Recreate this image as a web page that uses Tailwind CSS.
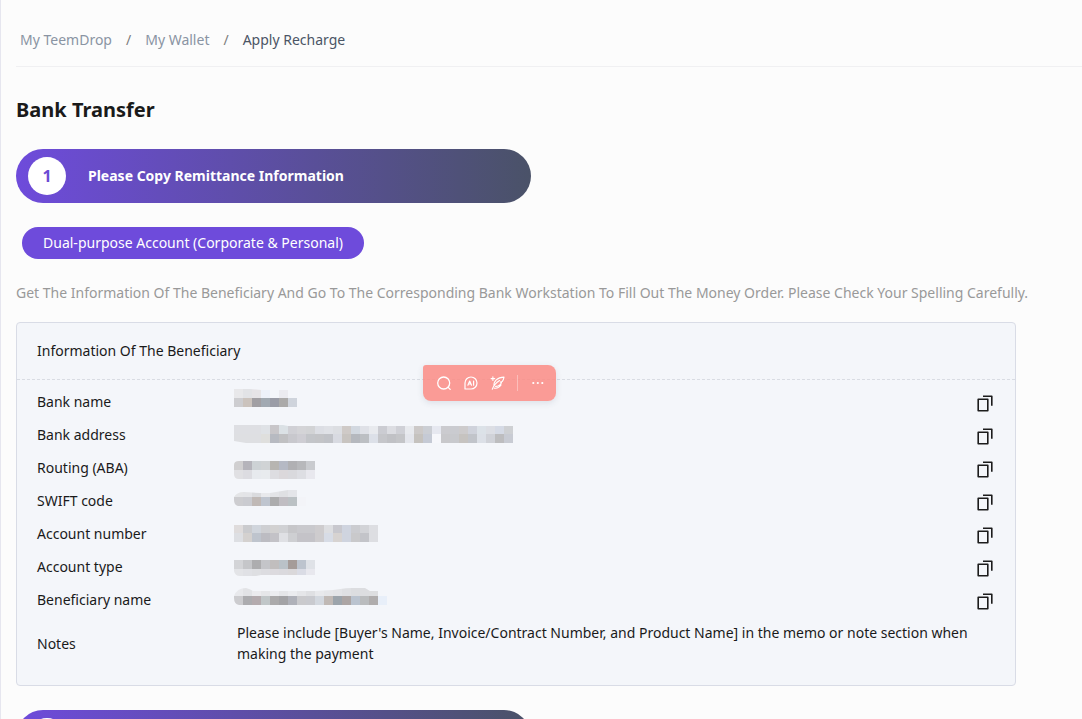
<!DOCTYPE html>
<html lang="en">

<head>
	<meta charset="UTF-8" />
	<meta name="viewport" content="width=device-width, initial-scale=1.0" />
	<title>Apply Recharge - TeemDrop</title>
	<script src="https://cdn.jsdelivr.net/npm/@tailwindcss/browser@4"></script>
</head>

<body class="bg-[#fcfcfc] font-['Noto_Sans','Open_Sans',sans-serif] text-[14px] text-[#1a1a1a]">
	<main class="min-h-screen border-l border-[#e6e6ef] pl-[15px]">
		<nav aria-label="Breadcrumb" class="border-b border-[#f0f0f2] pt-[30px] pb-4 pl-1">
			<ol class="flex items-center gap-[14px] leading-5 text-[#8a94a3]">
				<li><a href="#">My TeemDrop</a></li>
				<li aria-hidden="true" class="text-[#7d7d7d]">/</li>
				<li><a href="#">My Wallet</a></li>
				<li aria-hidden="true" class="text-[#7d7d7d]">/</li>
				<li class="text-[#4b5565]" aria-current="page">Apply Recharge</li>
			</ol>
		</nav>

		<h1 class="mt-7 text-[20px] leading-[30px] font-bold">Bank Transfer</h1>

		<div class="mt-6 flex h-[54px] max-w-[515px] items-center gap-[22px] rounded-full bg-linear-to-r/srgb from-[#6e4bdb] to-[#4a5268] pl-3 font-bold text-white">
			<span class="flex size-[38px] items-center justify-center rounded-full bg-white text-[16px] text-[#6b4bd3]">1</span>
			<h2 class="pb-[2px]">Please Copy Remittance Information</h2>
		</div>

		<button type="button" class="mt-6 ml-[6px] block h-8 min-w-[342px] rounded-full bg-[#6e4bdb] px-4 pb-[2px] text-white">Dual-purpose Account (Corporate &amp; Personal)</button>

		<p class="mt-6 leading-5 text-[#999]">Get The Information Of The Beneficiary And Go To The Corresponding Bank Workstation To Fill Out The Money Order. Please Check Your Spelling Carefully.</p>

		<section class="relative mt-[19px] max-w-[1000px] rounded border border-[#d9dce6] bg-[#f4f6fa] pb-[14px]">
			<h3 class="border-b border-dashed border-[#d9dce3] px-5 leading-[56px]">Information Of The Beneficiary</h3>
			<table class="mt-[6px] w-full text-left">
				<tbody>
					<tr class="h-[33px]">
						<th scope="row" class="w-[217px] pb-[2px] pl-5 font-normal">Bank name</th>
						<td><svg data-mosaic="0" class="block" width="288" height="33" aria-hidden="true"></svg></td>
						<td class="w-10 pt-[2px]"><button type="button" aria-label="Copy bank name" class="ml-[2px] block"><svg width="16" height="17"><use href="#copy" /></svg></button></td>
					</tr>
					<tr class="h-[33px]">
						<th scope="row" class="pb-[2px] pl-5 font-normal">Bank address</th>
						<td><svg data-mosaic="1" class="block" width="288" height="33" aria-hidden="true"></svg></td>
						<td class="pt-[2px]"><button type="button" aria-label="Copy bank address" class="ml-[2px] block"><svg width="16" height="17"><use href="#copy" /></svg></button></td>
					</tr>
					<tr class="h-[33px]">
						<th scope="row" class="pb-[2px] pl-5 font-normal">Routing (ABA)</th>
						<td><svg data-mosaic="2" class="block" width="288" height="33" aria-hidden="true"></svg></td>
						<td class="pt-[2px]"><button type="button" aria-label="Copy routing" class="ml-[2px] block"><svg width="16" height="17"><use href="#copy" /></svg></button></td>
					</tr>
					<tr class="h-[33px]">
						<th scope="row" class="pb-[2px] pl-5 font-normal">SWIFT code</th>
						<td><svg data-mosaic="3" class="block" width="288" height="33" aria-hidden="true"></svg></td>
						<td class="pt-[2px]"><button type="button" aria-label="Copy SWIFT code" class="ml-[2px] block"><svg width="16" height="17"><use href="#copy" /></svg></button></td>
					</tr>
					<tr class="h-[33px]">
						<th scope="row" class="pb-[2px] pl-5 font-normal">Account number</th>
						<td><svg data-mosaic="4" class="block" width="288" height="33" aria-hidden="true"></svg></td>
						<td class="pt-[2px]"><button type="button" aria-label="Copy account number" class="ml-[2px] block"><svg width="16" height="17"><use href="#copy" /></svg></button></td>
					</tr>
					<tr class="h-[33px]">
						<th scope="row" class="pb-[2px] pl-5 font-normal">Account type</th>
						<td><svg data-mosaic="5" class="block" width="288" height="33" aria-hidden="true"></svg></td>
						<td class="pt-[2px]"><button type="button" aria-label="Copy account type" class="ml-[2px] block"><svg width="16" height="17"><use href="#copy" /></svg></button></td>
					</tr>
					<tr class="h-[33px]">
						<th scope="row" class="pb-[2px] pl-5 font-normal">Beneficiary name</th>
						<td><svg data-mosaic="6" class="block" width="288" height="33" aria-hidden="true"></svg></td>
						<td class="pt-[2px]"><button type="button" aria-label="Copy beneficiary name" class="ml-[2px] block"><svg width="16" height="17"><use href="#copy" /></svg></button></td>
					</tr>
					<tr class="h-[54px]">
						<th scope="row" class="pb-[2px] pl-5 font-normal">Notes</th>
						<td colspan="2" class="pr-5 pb-[2px] pl-[3px] leading-[21px]">Please include [Buyer's Name, Invoice/Contract Number, and Product Name] in the memo or note section when making the payment</td>
					</tr>
				</tbody>
			</table>

			<!-- floating selection toolbar -->
			<div role="toolbar" aria-label="Quick actions" class="absolute top-[42px] left-[406px] flex h-9 w-[133px] items-center rounded-lg rounded-tl-[3px] bg-[#fa8b84]/85 pl-[7px] text-white shadow-[0_2px_6px_rgba(60,70,100,0.12)]">
				<button type="button" aria-label="Search" class="flex w-[27px] justify-center">
					<svg width="16" height="16" fill="none" stroke="currentColor" stroke-width="1.3" stroke-linecap="round"><circle cx="7.7" cy="8" r="6" /><path d="M12.2 12.4l2 2" /></svg>
				</button>
				<button type="button" aria-label="Ask AI" class="flex w-[27px] justify-center">
					<svg width="16" height="16" fill="none" stroke="currentColor" stroke-linecap="round" stroke-linejoin="round"><path stroke-width="1.2" d="M8 2a6 6 0 1 1 0 12H2V8a6 6 0 0 1 6-6z" /><path stroke-width="1.2" d="M4.9 10.2l1.8-4.2 1.8 4.2M5.6 9h2.2M10.6 6v4.2" /></svg>
				</button>
				<button type="button" aria-label="Rewrite" class="flex w-[27px] justify-center">
					<svg width="16" height="16" fill="none" stroke="currentColor" stroke-width="1.1" stroke-linecap="round" stroke-linejoin="round"><path d="M2.3 14.2C3.5 10.7 6 7.7 9.6 5.5M4 10.8C3.4 6.4 7.2 2.2 14 2.1c-.3 1.8-.8 3.2-1.7 4.4l-1.8.5 1 .7c-1.2 2.2-3.3 3.6-5.9 3.7M4.3 13.1c3 .6 5.1-.8 6.8-3.1M2.9 1.8v3.6M1.1 3.6h3.6" /></svg>
				</button>
				<span class="ml-[6px] h-4 w-px bg-white/35"></span>
				<button type="button" aria-label="More" class="ml-3 flex">
					<svg width="16" height="16" fill="currentColor"><circle cx="3.3" cy="8" r="1.1" /><circle cx="7.8" cy="8" r="1.1" /><circle cx="12.3" cy="8" r="1.1" /></svg>
				</button>
			</div>
		</section>

		<div class="mt-6 flex h-[54px] max-w-[515px] items-center rounded-full bg-linear-to-r/srgb from-[#6e4bdb] to-[#4a5268] pl-3">
			<span class="size-[38px] rounded-full bg-white"></span>
		</div>
	</main>

	<svg class="hidden">
		<symbol id="copy" viewBox="0 0 16 17">
			<path d="M1.2 4.2h9.6v11.6H1.2zM6 1.2h8.8v9.6" fill="none" stroke="#1c1c1c" stroke-width="1.6" stroke-linejoin="round" />
		</symbol>
	</svg>

	<script>
		// Masked values: y edges of the two block rows, their colours, and the outline that clips them
		const masked = [
			{
				y: [3, 12, 21],
				top: "e8e8ea e2e3e6 e6e4e7 edf1fa - ebebf0",
				bottom: "cdcdd0 cbc3bd a19fa3 a1a9b2 9a9ca6 abaaa9 cfd4dc",
				clip: "M0 3H16L27 4H63V21H0z"
			},
			{
				y: [6, 15, 24],
				top: "dedfe3 dedfe3 dedfe3 dfe2e6 c8c6c9 dbe1e5 d0d0d5 d4d4d7 d2d3d5 dcdee4 dfe1e6 dcdee2 cfcac7 d2d8e0 dfe1e7 e8eaee cbccd2 dcdde2 cfd0d6 e8eaee ccc9c8 cbced4 e6e8f0 cbcbcf cacbd0 cdcbcc cfd2db dce2e8 dcdee4 d5dae5 ced0d3",
				bottom: "dedfe2 dedfe2 dedfe2 dfdfdd b7bac1 c0c0c2 c8c8cd cecdd3 c3c5c9 c3c4c7 c0c2c7 d8dae1 c8c4c0 b5b8be bcbfc3 dce0e8 c5c6ca c0c1c5 c4c5c8 e4e6ec c5c2be c5cad5 f6f7fb c8c8cb c8c9cd c6c3c0 c1c4ca dce0e7 d0d2d8 bdbdbf c8cbd3",
				clip: "M0 6H49L54 7H279V24H12L0 22z"
			},
			{
				y: [9, 18, 27],
				top: "d0cfd0 b5b4bb cdd2d5 d0d3d5 b7b5b1 b5b9c4 b0b0b3 b7b8bb c9cbcf",
				bottom: "e0e0e3 dcdce1 e7eaee e8ebee dddde1 dbd8db d9d9dd dddee3 e8e8ee",
				clip: "M5 9H81V27H5Q0 27 0 22V13Q0 9 5 9z"
			},
			{
				y: [5, 12, 21],
				top: "e4e5e7 e3e4e7 dadbde e8e9ec e3e4e7 dfe0e3 e4e5e9",
				bottom: "cdcdd0 cacbd0 c0b9b6 bfc5cf acacad c0bdc2 bbc1c4 f3f4f8",
				clip: "M0 12Q3 7 10 7L26 8H36L54 5H63V12H72V21H4Q0 20 0 15z"
			},
			{
				y: [7, 15, 24],
				top: "dfdcdc cacbce d0d5dc cecfd2 d2d1d1 d0d1d4 c6c6c9 c9c9cd c9c9cd ceccce dddee1 c8c8ce cfd4df cbccd0 d2d3d7 dddee2",
				bottom: "dddfe3 d4d1cf bec4cd bcbcc2 c3c2c7 dfe0e4 cecfd2 c4c3c8 c4c3c8 ceccce d7dce6 d7d3d1 cfd4df c9c9cb c3c4c9 dddee2",
				clip: "M0 7H144V24H0z"
			},
			{
				y: [9, 18, 25],
				top: "d3d4d7 c5c6c9 adadaf c4c5c9 c1bebe bac2c8 a59c99 bdc4ce dfe2e7",
				bottom: "e3e4e7 e0e1e5 dedfe2 dcdce0 dcdade dad9dd dad8da dadce5 e8e8ee",
				clip: "M0 9H81V24H27L22 25H6Q1 25 0 20z"
			},
			{
				y: [4, 12, 21],
				top: "e8e9ec e2e3e6 ebebee e5e6e9 ecedf0 e5e6e9 ebecef e5e6e9 dfe0e3 e8e9ec e5e6e9 e3e4e7 dfe0e3 dcdde0 dcdde0 dddee0",
				bottom: "cccccf acacaf b4abae c0c6c8 abaaab a3a3a6 afb1b9 cacacd c9cacf d3d8df c0b9b5 9ca4ab aca5a4 bac3cf babcbe b0adad e8eff9",
				clip: "M0 12Q3 4 12 4Q16 5 19 7H81L99 6Q117 3 131 4L136 7H144V12H153V21H5Q0 20 0 14z"
			}
		];

		const NS = "http://www.w3.org/2000/svg";

		masked.forEach((value, i) => {
			const svg = document.querySelector(`[data-mosaic="${i}"]`);
			svg.innerHTML = `<clipPath id="mask${i}"><path d="${value.clip}" /></clipPath>`;
			const group = document.createElementNS(NS, "g");
			group.setAttribute("clip-path", `url(#mask${i})`);
			group.setAttribute("shape-rendering", "crispEdges");

			[value.top, value.bottom].forEach((colors, row) => {
				colors.split(" ").forEach((color, col) => {
					if (color === "-") return;
					const rect = document.createElementNS(NS, "rect");
					rect.setAttribute("x", col * 9);
					rect.setAttribute("y", value.y[row]);
					rect.setAttribute("width", 9);
					rect.setAttribute("height", value.y[row + 1] - value.y[row]);
					rect.setAttribute("fill", "#" + color);
					group.appendChild(rect);
				});
			});
			svg.appendChild(group);
		});
	</script>
</body>

</html>
